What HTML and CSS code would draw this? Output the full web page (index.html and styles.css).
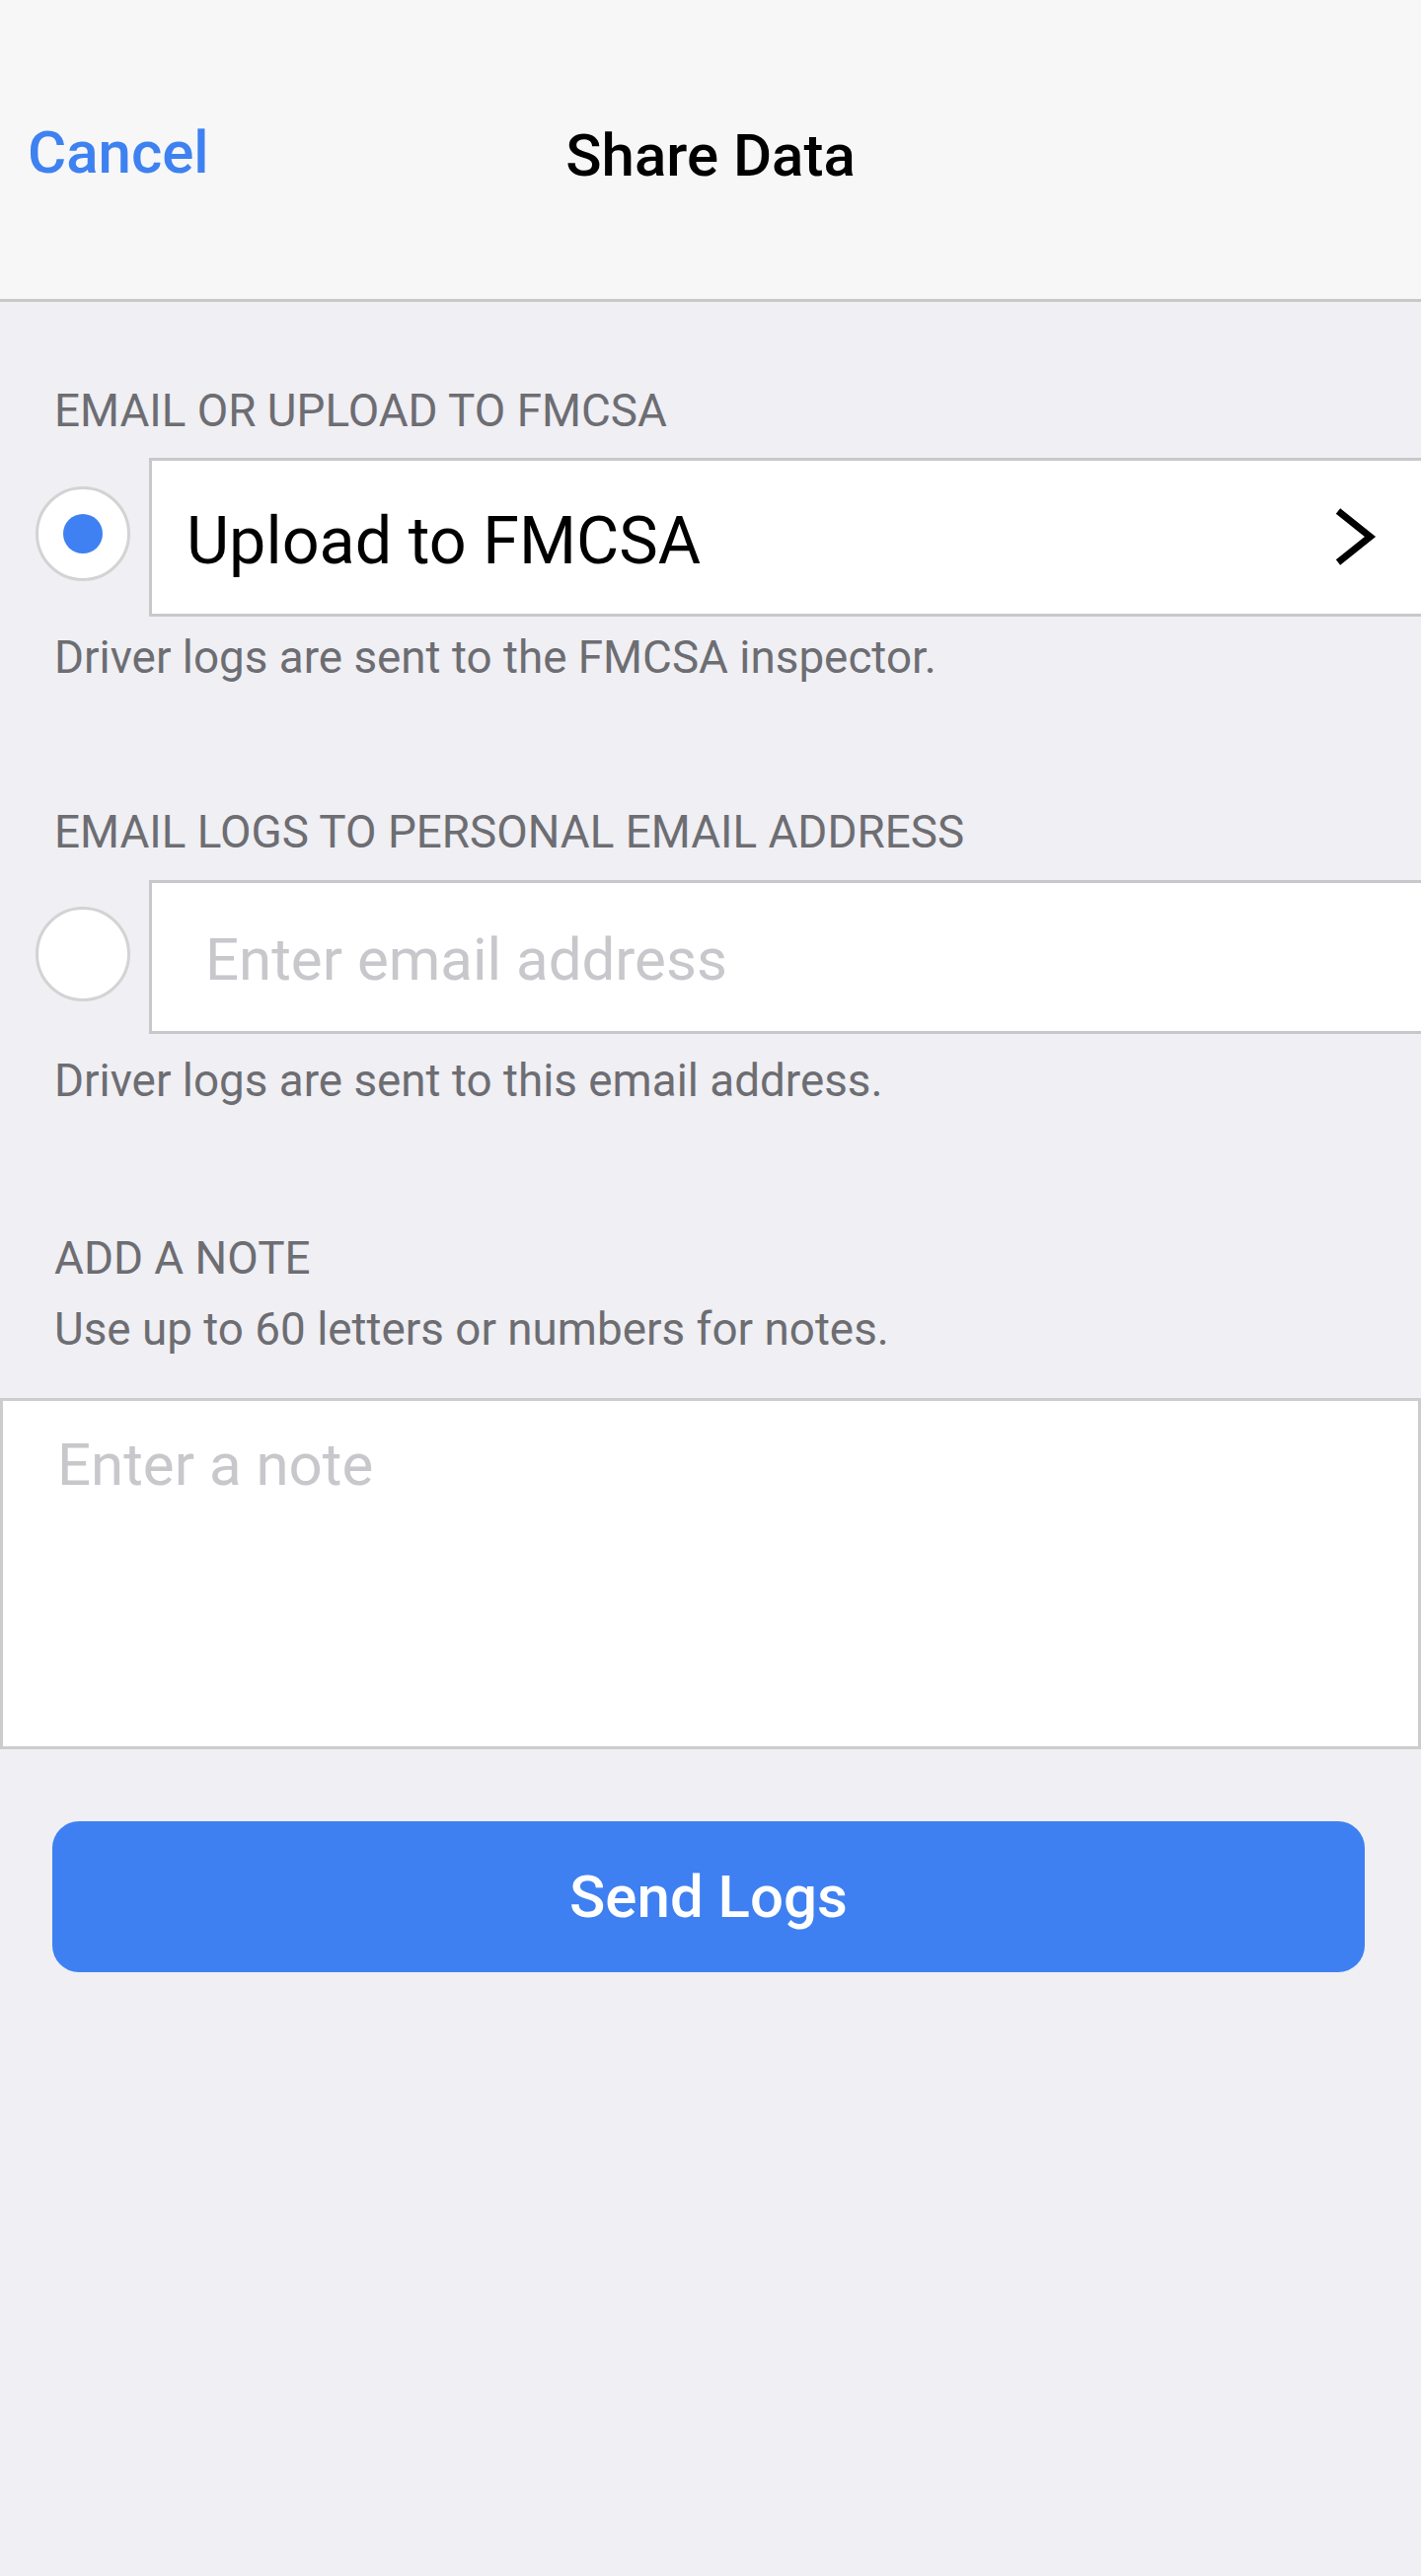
FILE: index.html
```html
<!DOCTYPE html>
<html lang="en">
<head>
<meta charset="utf-8">
<title>Share Data</title>
<link rel="stylesheet" href="styles.css">
</head>
<body>
<div class="screen">
  <header class="nav">
    <a class="nav-cancel" href="#">Cancel</a>
    <h1 class="nav-title">Share Data</h1>
    <span class="nav-spacer"></span>
  </header>

  <main class="content">
    <section class="group group-upload">
      <h2 class="group-label">EMAIL OR UPLOAD TO FMCSA</h2>
      <div class="choice choice-upload">
        <span class="radio radio-on"><span class="radio-dot"></span></span>
        <div class="field field-upload">
          <span class="field-text">Upload to FMCSA</span>
          <svg class="chevron" width="50" height="70" viewBox="0 0 50 70" aria-hidden="true">
            <polyline points="6,8 38.5,34 6,60" fill="none" stroke="#000" stroke-width="7" stroke-linejoin="miter" stroke-miterlimit="10"/>
          </svg>
        </div>
      </div>
      <p class="group-help help-upload">Driver logs are sent to the FMCSA inspector.</p>
    </section>

    <section class="group group-email">
      <h2 class="group-label">EMAIL LOGS TO PERSONAL EMAIL ADDRESS</h2>
      <div class="choice choice-email">
        <span class="radio"></span>
        <div class="field field-email">
          <span class="field-placeholder">Enter email address</span>
        </div>
      </div>
      <p class="group-help help-email">Driver logs are sent to this email address.</p>
    </section>

    <section class="group group-note">
      <h2 class="group-label">ADD A NOTE</h2>
      <p class="group-help help-note">Use up to 60 letters or numbers for notes.</p>
      <div class="note-box">
        <span class="note-placeholder">Enter a note</span>
      </div>
    </section>

    <div class="actions">
      <button class="send-btn" type="button">Send Logs</button>
    </div>
  </main>
</div>
</body>
</html>
```

FILE: styles.css
```css
html, body {
  margin: 0;
  padding: 0;
}

body {
  background: #efeff4;
  font-family: Roboto, "Noto Sans", "Liberation Sans", sans-serif;
  color: #000;
}

.screen {
  width: 1440px;
  min-height: 2611px;
  overflow: hidden;
  background: #efeff4;
}

/* Header */
.nav {
  box-sizing: border-box;
  height: 306px;
  padding-top: 12px;
  background: #f7f7f7;
  border-bottom: 3px solid #c8c8c8;
  display: grid;
  grid-template-columns: 1fr auto 1fr;
  align-items: center;
}

.nav-cancel {
  justify-self: start;
  padding-left: 28px;
  margin-bottom: 6px;
  font-size: 60px;
  line-height: 70px;
  font-weight: 500;
  color: #3e81f1;
  text-decoration: none;
}

.nav-title {
  margin: 0;
  font-size: 60px;
  line-height: 70px;
  font-weight: 500;
  color: #000;
}

/* Groups */
.group {
  display: flex;
  flex-direction: column;
}

.group-upload {
  padding-top: 84px;
}

.group-email {
  padding-top: 123px;
}

.group-note {
  padding-top: 126px;
}

.group-label,
.group-help {
  margin: 0;
  padding-left: 55px;
  font-size: 45.8px;
  line-height: 54px;
  font-weight: 400;
  color: #6d6d72;
}

.group-upload .group-label {
  margin-bottom: 20px;
}

.group-email .group-label {
  margin-bottom: 21.5px;
}

.help-upload {
  margin-top: 14.5px;
}

.help-email {
  margin-top: 21px;
}

.help-note {
  margin-top: 17.5px;
}

/* Choice rows */
.choice {
  display: flex;
  align-items: center;
}

.radio {
  box-sizing: border-box;
  flex: none;
  width: 96px;
  height: 96px;
  margin-left: 36px;
  margin-right: 19px;
  margin-bottom: 7px;
  border: 3px solid #d3d3d3;
  border-radius: 50%;
  background: #fff;
  display: flex;
  align-items: center;
  justify-content: center;
}

.radio-dot {
  width: 40px;
  height: 40px;
  border-radius: 50%;
  background: #3f80f2;
}

.field {
  box-sizing: border-box;
  flex: 1;
  display: flex;
  align-items: center;
  background: #fff;
  border: 3px solid #c8c8cc;
  border-right: none;
}

.field-upload {
  height: 161px;
  padding-left: 35px;
}

.field-text {
  margin-top: 7px;
  font-size: 66.5px;
  line-height: 76px;
  font-weight: 400;
  color: #000;
}

.chevron {
  flex: none;
  margin-left: auto;
  margin-right: 40px;
}

.field-email {
  height: 156px;
  padding-left: 54px;
}

.field-placeholder {
  margin-top: 6px;
  font-size: 60px;
  line-height: 70px;
  font-weight: 400;
  color: #c7c7cc;
}

/* Note */
.note-box {
  box-sizing: border-box;
  margin-top: 42.5px;
  height: 356px;
  padding-top: 29.5px;
  padding-left: 55px;
  background: #fff;
  border: 3px solid #cccccc;
}

.note-placeholder {
  display: block;
  font-size: 60px;
  line-height: 70px;
  font-weight: 400;
  color: #c7c7cc;
}

/* Actions */
.actions {
  padding-top: 73px;
  padding-left: 53px;
}

.send-btn {
  display: block;
  width: 1330px;
  height: 153px;
  margin: 0;
  padding: 0;
  border: none;
  border-radius: 27px;
  background: #3e80f2;
  color: #fff;
  font-family: Roboto, "Noto Sans", "Liberation Sans", sans-serif;
  font-size: 60px;
  line-height: 70px;
  font-weight: 500;
  cursor: pointer;
}
```
